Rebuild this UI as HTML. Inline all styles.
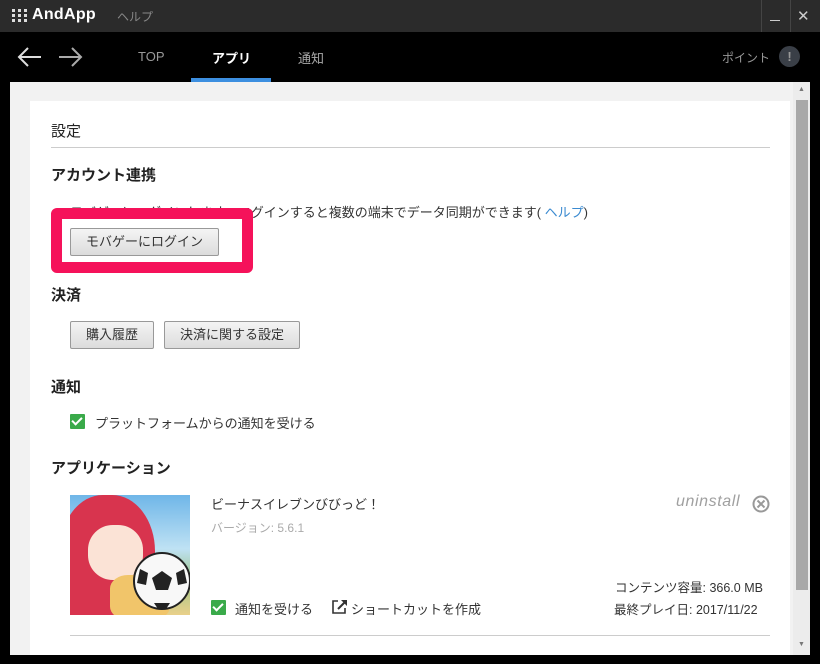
<!DOCTYPE html>
<html><head><meta charset="utf-8"><style>
*{margin:0;padding:0;box-sizing:border-box}
body{width:820px;height:664px;background:#000;position:relative;overflow:hidden;font-family:"Liberation Sans","Noto Sans CJK JP",sans-serif;color:#333}
.a{position:absolute;white-space:nowrap}
.h{font-size:15px;font-weight:bold;color:#222}
.btn{position:absolute;height:28px;border:1px solid #999;border-radius:2px;background:linear-gradient(#f4f4f4,#dcdcdc);font-size:13px;color:#333;text-align:center;line-height:26px}
.cb{position:absolute;width:15px;height:15px;background:#3aaa4a;border-radius:1px}
.cb:after{content:"";position:absolute;left:4px;top:1px;width:4px;height:8px;border:solid #fff;border-width:0 2px 2px 0;transform:rotate(45deg)}
.t{font-size:13px;color:#333}
</style></head><body>
<div class="a" style="left:0;top:0;width:820px;height:32px;background:#2b2b2b"></div>
<div class="a" style="left:12px;top:9px;width:16px;height:14px">
<svg width="16" height="14"><g fill="#ddd"><rect x="0" y="0" width="3" height="3"/><rect x="6" y="0" width="3" height="3"/><rect x="12" y="0" width="3" height="3"/><rect x="0" y="5" width="3" height="3"/><rect x="6" y="5" width="3" height="3"/><rect x="12" y="5" width="3" height="3"/><rect x="0" y="10" width="3" height="3"/><rect x="6" y="10" width="3" height="3"/><rect x="12" y="10" width="3" height="3"/></g></svg></div>
<div class="a" style="left:32px;top:6px;font-size:16px;font-weight:bold;color:#fff;letter-spacing:0.3px">AndApp</div>
<div class="a" style="left:117px;top:8px;font-size:12px;color:#888">ヘルプ</div>
<div class="a" style="left:761px;top:0;width:1px;height:32px;background:#444"></div>
<div class="a" style="left:790px;top:0;width:1px;height:32px;background:#444"></div>
<div class="a" style="left:770px;top:20px;width:10px;height:1px;background:#ccc"></div>
<div class="a" style="left:797px;top:7px;font-size:15px;color:#ccc">✕</div>
<svg class="a" style="left:17px;top:46px" width="70" height="22"><g stroke="#ddd" stroke-width="2" fill="none"><path d="M2 11H24M11 2L2 11L11 20"/><path d="M42 11H64M55 2L64 11L55 20" stroke="#aaa"/></g></svg>
<div class="a" style="left:138px;top:49px;font-size:13px;color:#999">TOP</div>
<div class="a" style="left:212px;top:48px;font-size:13px;color:#fff;font-weight:bold">アプリ</div>
<div class="a" style="left:191px;top:78px;width:80px;height:4px;background:#3d8fe0"></div>
<div class="a" style="left:298px;top:48px;font-size:13px;color:#aaa">通知</div>
<div class="a" style="left:722px;top:49px;font-size:12px;color:#999">ポイント</div>
<div class="a" style="left:779px;top:46px;width:21px;height:21px;border-radius:50%;background:#3a3f47;color:#999;font-size:13px;text-align:center;line-height:21px;font-weight:bold">!</div>
<div class="a" style="left:10px;top:82px;width:800px;height:573px;background:#f2f2f2"></div>
<div class="a" style="left:793px;top:82px;width:17px;height:573px;background:#ececec"></div>
<div class="a" style="left:796px;top:100px;width:12px;height:490px;background:#a8a8a8"></div>
<div class="a" style="left:798px;top:86px;font-size:7px;color:#777">▲</div>
<div class="a" style="left:798px;top:641px;font-size:7px;color:#777">▼</div>
<div class="a" style="left:30px;top:101px;width:760px;height:554px;background:#fff"></div>
<div class="a h" style="left:51px;top:120px;font-weight:normal;font-size:15px">設定</div>
<div class="a" style="left:51px;top:147px;width:719px;height:1px;background:#ccc"></div>
<div class="a h" style="left:51px;top:164px">アカウント連携</div>
<div class="a t" style="left:70px;top:202px">モバゲーにログインします。ログインすると複数の端末でデータ同期ができます( <span style="color:#3a8ad0">ヘルプ</span>)</div>
<div class="a" style="left:51px;top:208px;width:202px;height:65px;border:11px solid #f5125a;border-radius:6px;background:#fff"></div>
<div class="btn" style="left:70px;top:228px;width:149px">モバゲーにログイン</div>
<div class="a h" style="left:51px;top:284px">決済</div>
<div class="btn" style="left:70px;top:321px;width:84px">購入履歴</div>
<div class="btn" style="left:164px;top:321px;width:136px">決済に関する設定</div>
<div class="a h" style="left:51px;top:376px">通知</div>
<div class="cb" style="left:70px;top:414px"></div>
<div class="a t" style="left:95px;top:413px">プラットフォームからの通知を受ける</div>
<div class="a h" style="left:51px;top:457px">アプリケーション</div>
<div class="a" style="left:70px;top:495px;width:120px;height:120px;overflow:hidden;background:linear-gradient(#6fb6e8,#bfe2f4 45%,#9cc48a 70%,#e9d08a)">
<div class="a" style="left:-10px;top:0;width:95px;height:125px;border-radius:45% 45% 20% 20%;background:#d8344e"></div>
<div class="a" style="left:18px;top:30px;width:55px;height:55px;border-radius:45%;background:#fbe3d6"></div>
<div class="a" style="left:40px;top:80px;width:60px;height:45px;background:#f1c56a;border-radius:30%"></div>
<svg class="a" style="left:62px;top:56px" width="60" height="60"><circle cx="30" cy="30" r="28" fill="#f8f8f8" stroke="#222" stroke-width="2"/><polygon points="30,20 40,27 36,39 24,39 20,27" fill="#222"/><polygon points="8,18 16,22 14,34 5,32" fill="#222"/><polygon points="52,18 44,22 46,34 55,32" fill="#222"/><polygon points="22,52 38,52 34,58 26,58" fill="#222"/></svg>
</div>
<div class="a t" style="left:211px;top:494px">ビーナスイレブンびびっど！</div>
<div class="a" style="left:211px;top:519px;font-size:12px;color:#aaa">バージョン: 5.6.1</div>
<div class="a" style="left:676px;top:493px;font-size:16px;font-style:italic;color:#a0a0a0;letter-spacing:0.6px">uninstall</div>
<svg class="a" style="left:752px;top:495px" width="18" height="18"><circle cx="9" cy="9" r="7.5" stroke="#999" stroke-width="2" fill="none"/><path d="M5.5 5.5L12.5 12.5M12.5 5.5L5.5 12.5" stroke="#999" stroke-width="2"/></svg>
<div class="a t" style="left:615px;top:577px;font-size:12.5px">コンテンツ容量: 366.0 MB</div>
<div class="a t" style="left:614px;top:599px;font-size:12.5px">最終プレイ日: 2017/11/22</div>
<div class="cb" style="left:211px;top:600px"></div>
<div class="a t" style="left:235px;top:599px">通知を受ける</div>
<svg class="a" style="left:332px;top:599px" width="16" height="15"><path d="M6 2H1V14H13V9" stroke="#333" stroke-width="1.6" fill="none"/><path d="M6 10L13 3" stroke="#333" stroke-width="2"/><path d="M9 1H15V7Z" fill="#333"/></svg>
<div class="a t" style="left:351px;top:599px">ショートカットを作成</div>
<div class="a" style="left:70px;top:635px;width:700px;height:1px;background:#ccc"></div>
</body></html>
